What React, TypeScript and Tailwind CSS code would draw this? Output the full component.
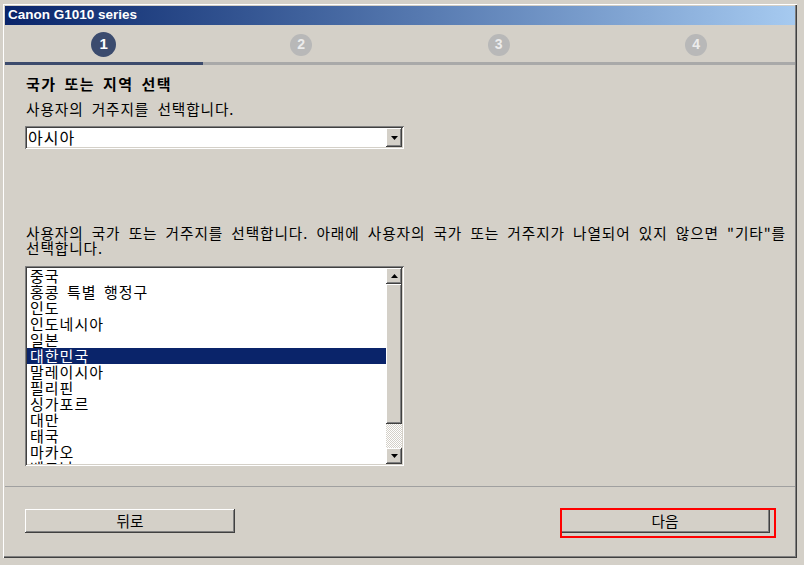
import React from "react";

const raised =
  "shadow-[inset_-1px_-1px_#404040,inset_1px_1px_#ffffff,inset_-2px_-2px_#808080,inset_2px_2px_#d4d0c8]";
const sunken =
  "shadow-[inset_1px_1px_#808080,inset_-1px_-1px_#ffffff,inset_2px_2px_#404040,inset_-2px_-2px_#d4d0c8]";

const ko = { fontFamily: '"Noto Sans CJK KR", "Noto Sans", sans-serif' };

function Arrow({ up }: { up?: boolean }) {
  return (
    <svg width="7" height="4" viewBox="0 0 7 4">
      {up ? <polygon points="3.5,0 7,4 0,4" fill="#000" /> : <polygon points="0,0 7,0 3.5,4" fill="#000" />}
    </svg>
  );
}

const countries = [
  "중국",
  "홍콩 특별 행정구",
  "인도",
  "인도네시아",
  "일본",
  "대한민국",
  "말레이시아",
  "필리핀",
  "싱가포르",
  "대만",
  "태국",
  "마카오",
  "베트남",
];

function Step({ n, active }: { n: number; active?: boolean }) {
  return (
    <div className="flex items-center justify-center">
      <div
        className={
          active
            ? "flex h-[25px] w-[25px] items-center justify-center rounded-full bg-[#3b4b6e] text-[15px] font-bold text-white"
            : "flex h-[22px] w-[22px] items-center justify-center rounded-full bg-[#b8b8b8] text-[14px] font-bold text-[#ececec]"
        }
        style={{ fontFamily: '"Liberation Sans", Arial, sans-serif' }}
      >
        {n}
      </div>
    </div>
  );
}

export default function App() {
  return (
    <div className="h-[565px] w-[804px] overflow-hidden bg-[#d4d0c8] pl-[3px] pt-[4px]">
      <div className="flex h-[554px] w-[794px] flex-col p-[2px] pb-[2px] pr-[2px] shadow-[inset_1px_1px_#ffffff,inset_-1px_-1px_#404040,inset_-2px_-2px_#808080]">
        {/* Title bar */}
        <div
          className="flex h-[19px] items-center bg-linear-to-r from-[#0a246a] to-[#a6caf0] pl-[3px] text-[13.5px] font-bold text-white"
          style={{ fontFamily: '"Liberation Sans", Arial, sans-serif' }}
        >
          Canon G1010 series
        </div>

        {/* Steps */}
        <div className="grid h-[37px] grid-cols-4 items-center pt-[2px]">
          <Step n={1} active />
          <Step n={2} />
          <Step n={3} />
          <Step n={4} />
        </div>
        <div className="grid h-[3px] grid-cols-4">
          <div className="bg-[#3c4b6d]" />
          <div className="col-span-3 bg-[#a9a9a9]" />
        </div>

        {/* Body */}
        <div className="flex flex-1 flex-col pl-[20px] pr-[1px] pt-[9px] text-black" style={ko}>
          <div className="h-[20px] pl-[1px] text-[15px] font-bold leading-[20px] tracking-[1.5px] [word-spacing:3px]">
            국가 또는 지역 선택
          </div>
          <div className="mt-[6px] h-[18px] pl-[1px] text-[14.67px] leading-[18px] tracking-[0.9px] [word-spacing:4px]">
            사용자의 거주지를 선택합니다.
          </div>

          {/* Select */}
          <div className={`mt-[8px] flex h-[23px] w-[379px] bg-white p-[2px] ${sunken}`}>
            <div className="flex-1 pl-[1px] text-[16px] leading-[19px] tracking-[1px]">아시아</div>
            <div className={`flex h-[19px] w-[16px] items-center justify-center bg-[#d4d0c8] ${raised}`}>
              <Arrow />
            </div>
          </div>

          <div className="mt-[76px] w-[769px] break-keep pl-[1px] text-left text-[14.67px] leading-[15px] tracking-[0.9px] [word-spacing:4px]">
            사용자의 국가 또는 거주지를 선택합니다. 아래에 사용자의 국가 또는 거주지가 나열되어 있지 않으면 "기타"를 선택합니다.
          </div>

          {/* List */}
          <div className={`mt-[11px] flex h-[200px] w-[379px] bg-white p-[2px] ${sunken}`}>
            <div className="flex-1 overflow-hidden">
              {countries.map((c) => (
                <div
                  key={c}
                  className={
                    c === "대한민국"
                      ? "h-[16px] whitespace-nowrap bg-[#0a246a] pl-[3px] text-[15px] leading-[16px] tracking-[1px] text-white [word-spacing:3px]"
                      : "h-[16px] whitespace-nowrap pl-[3px] text-[15px] leading-[16px] tracking-[1px] [word-spacing:3px]"
                  }
                >
                  {c}
                </div>
              ))}
            </div>
            <div className="flex w-[16px] flex-col">
              <div className={`flex h-[16px] items-center justify-center bg-[#d4d0c8] ${raised}`}>
                <Arrow up />
              </div>
              <div className={`h-[140px] bg-[#d4d0c8] ${raised}`} />
              <div className="flex-1 bg-[repeating-conic-gradient(#ffffff_0%_25%,#d4d0c8_0%_50%)] bg-[length:2px_2px]" />
              <div className={`flex h-[16px] items-center justify-center bg-[#d4d0c8] ${raised}`}>
                <Arrow />
              </div>
            </div>
          </div>
        </div>

        {/* Footer */}
        <div className="h-[70px] border-t border-[#a0a0a0]" style={ko}>
          <div className="flex justify-between pl-[20px] pr-[25px] pt-[22px]">
            <button
              className={`flex h-[24px] w-[210px] items-center justify-center bg-[#d4d0c8] text-[14.67px] text-black ${raised}`}
            >
              뒤로
            </button>
            <div className="relative">
              <button
                className={`flex h-[24px] w-[210px] items-center justify-center bg-[#d4d0c8] text-[14.67px] text-black ${raised}`}
              >
                다음
              </button>
              <div className="pointer-events-none absolute left-0 top-[-1px] h-[30px] w-[216px] border-2 border-[#ff0000]" />
            </div>
          </div>
        </div>
      </div>
    </div>
  );
}
